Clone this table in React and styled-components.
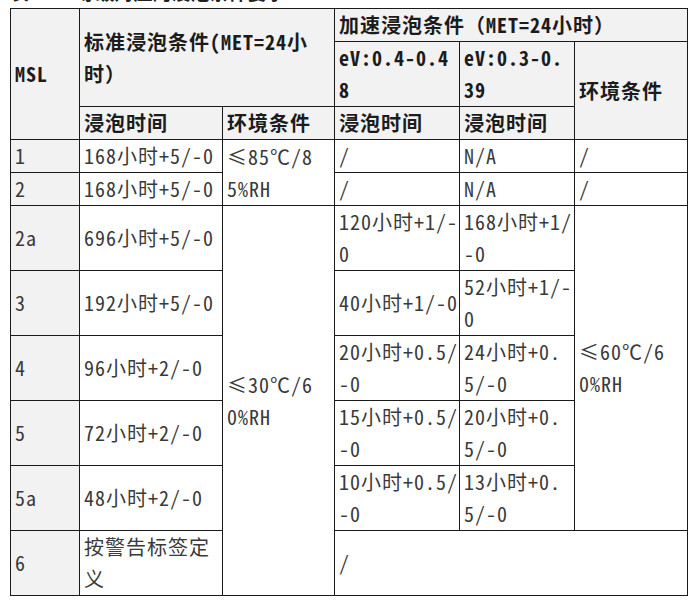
import React from 'react';
import styled, { createGlobalStyle } from 'styled-components';

const GlobalStyle = createGlobalStyle`
  html, body {
    margin: 0;
    padding: 0;
    background: #fff;
  }
  body {
    font-family: "Noto Sans Mono CJK SC", "Noto Sans CJK SC", "Liberation Mono", monospace;
  }
`;

const Page = styled.div`
  padding: 0 0 0 10px;
  width: 695px;
  box-sizing: border-box;
`;

// bottom edge of a caption line that is cut off by the screenshot
const Caption = styled.div`
  height: 3px;
  overflow: hidden;
`;

const CaptionText = styled.div`
  margin-top: -18px;
  line-height: 20px;
  font-size: 19px;
  font-weight: 700;
  color: #222;
  white-space: nowrap;
`;

const Table = styled.table`
  margin-top: 5px;
  border-collapse: collapse;
  table-layout: fixed;
  width: 677px;
  font-size: 20px;
  letter-spacing: 1px;
`;

const Cell = styled.td`
  border: 1px solid #1a1a1a;
  padding: 0 4px;
  line-height: 32px;
  vertical-align: middle;
  white-space: nowrap;
  overflow: hidden;
  text-align: left;
  color: ${(p) => (p.$head ? '#1c1c1c' : '#3a3a3a')};
  font-weight: ${(p) => (p.$head ? 700 : 400)};
  background: ${(p) => (p.$shade ? '#f2f2f2' : '#fff')};
`;

const colWidths = [69, 143, 112, 125, 115, 113];

function Lines({ text }) {
  const parts = text.split('|');
  return parts.map((t, i) => (
    <React.Fragment key={i}>
      {i > 0 && <br />}
      {t}
    </React.Fragment>
  ));
}

function H({ children, ...rest }) {
  return (
    <Cell as="th" $head $shade {...rest}>
      <Lines text={children} />
    </Cell>
  );
}

function D({ children, shade, ...rest }) {
  return (
    <Cell $shade={shade} {...rest}>
      <Lines text={children} />
    </Cell>
  );
}

const rows = [
  { msl: '2a', std: '696小时+5/-0', a: '120小时+1/-|0', b: '168小时+1/|-0' },
  { msl: '3', std: '192小时+5/-0', a: '40小时+1/-0', b: '52小时+1/-|0' },
  { msl: '4', std: '96小时+2/-0', a: '20小时+0.5/|-0', b: '24小时+0.|5/-0' },
  { msl: '5', std: '72小时+2/-0', a: '15小时+0.5/|-0', b: '20小时+0.|5/-0' },
  { msl: '5a', std: '48小时+2/-0', a: '10小时+0.5/|-0', b: '13小时+0.|5/-0' },
];

export default function App() {
  return (
    <Page>
      <GlobalStyle />
      <Caption>
        <CaptionText>表3 MSL等级对应的浸泡条件要求</CaptionText>
      </Caption>
      <Table>
        <colgroup>
          {colWidths.map((w, i) => (
            <col key={i} style={{ width: w }} />
          ))}
        </colgroup>
        <tbody>
          <tr>
            <H rowSpan={3}>MSL</H>
            <H colSpan={2} rowSpan={2}>标准浸泡条件(MET=24小|时）</H>
            <H colSpan={3}>加速浸泡条件（MET=24小时）</H>
          </tr>
          <tr>
            <H>eV:0.4-0.4|8</H>
            <H>eV:0.3-0.|39</H>
            <H rowSpan={2}>环境条件</H>
          </tr>
          <tr>
            <H>浸泡时间</H>
            <H>环境条件</H>
            <H>浸泡时间</H>
            <H>浸泡时间</H>
          </tr>
          <tr>
            <D shade>1</D>
            <D>168小时+5/-0</D>
            <D rowSpan={2}>≤85℃/8|5%RH</D>
            <D>/</D>
            <D>N/A</D>
            <D>/</D>
          </tr>
          <tr>
            <D shade>2</D>
            <D>168小时+5/-0</D>
            <D>/</D>
            <D>N/A</D>
            <D>/</D>
          </tr>
          {rows.map((r, i) => (
            <tr key={r.msl}>
              <D shade>{r.msl}</D>
              <D>{r.std}</D>
              {i === 0 && <D rowSpan={6}>≤30℃/6|0%RH</D>}
              <D>{r.a}</D>
              <D>{r.b}</D>
              {i === 0 && <D rowSpan={5}>≤60℃/6|0%RH</D>}
            </tr>
          ))}
          <tr>
            <D shade>6</D>
            <D>按警告标签定|义</D>
            <D colSpan={3}>/</D>
          </tr>
        </tbody>
      </Table>
    </Page>
  );
}
